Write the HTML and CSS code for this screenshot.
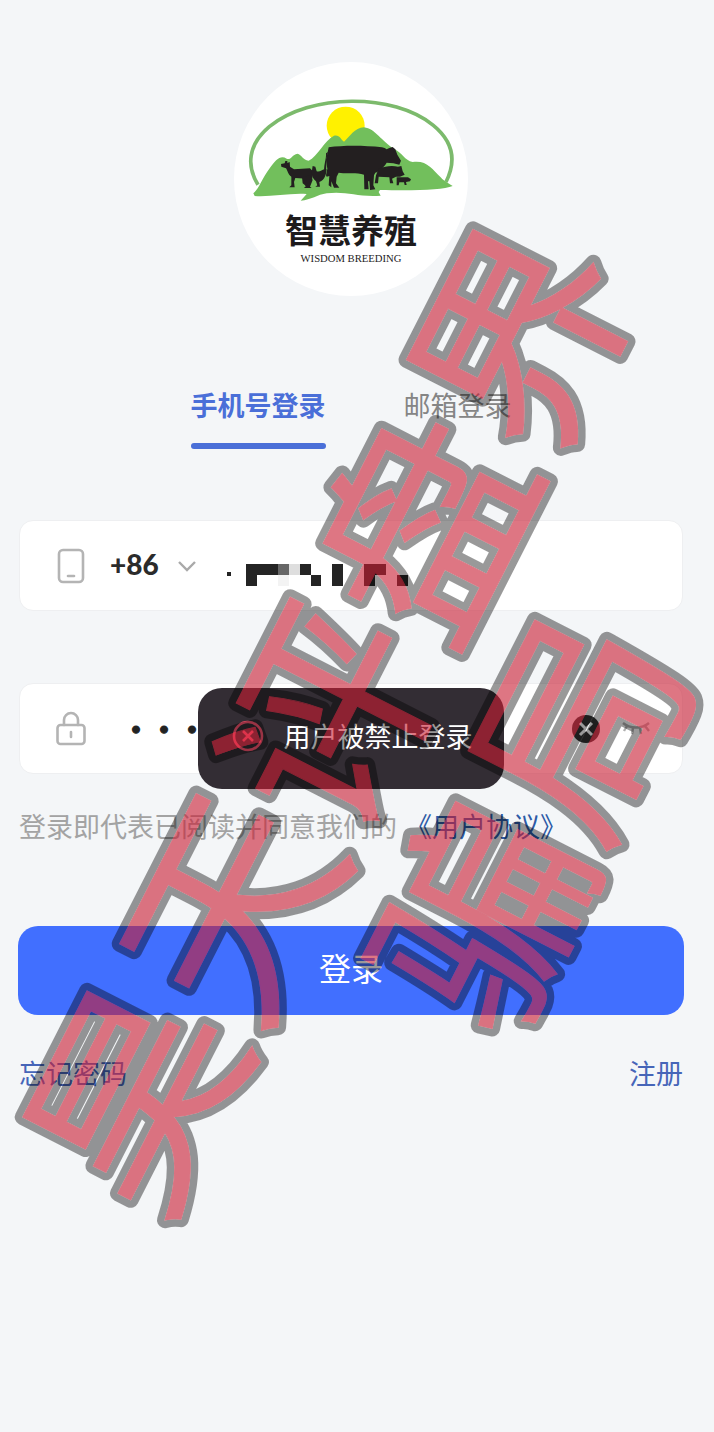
FILE: index.html
```html
<!DOCTYPE html>
<html lang="zh-CN">
<head>
  <meta charset="UTF-8">
  <meta name="viewport" content="width=device-width, initial-scale=1.0">
  <title>智慧养殖</title>
  <link rel="stylesheet" href="styles.css">
</head>
<body>

<main class="login">
  <svg class="logo" viewBox="12 6 702 702" role="img" aria-label="智慧养殖">
    <circle cx="363" cy="357" r="351" fill="#fff"/>
    <path d="M84 374C50 320 52 255 118 200C240 100 490 98 610 196C676 250 676 310 648 366" fill="none" stroke="#7cba6c" stroke-width="11"/>
    <circle cx="347" cy="197" r="57" fill="#fff100"/>
    <path d="M70 400C88 384 98 352 118 326C138 298 152 284 170 296C182 302 186 284 202 281C216 284 218 300 236 302C262 290 284 240 312 227C328 222 334 240 342 245C358 232 374 202 402 202C436 206 454 244 494 268C516 278 524 302 548 306C590 300 606 326 632 352C644 366 660 372 668 378C640 390 560 392 450 390L446 396L452 407C380 412 350 392 290 400C262 404 244 420 212 422L230 402C180 398 120 412 74 408Z" fill="#72bf5c"/>
    <g fill="#231f20">
      <!-- cow -->
      <path d="M296 262C340 256 400 256 456 262L464 264L470 268L478 264L488 261L496 268L502 284L513 302L508 314L490 310L470 308C462 322 448 334 436 338L432 346L430 376L436 388L420 390L418 364L414 364L416 388H403L402 344C380 336 352 342 326 338L320 350L318 370L328 383H312L304 364L304 382L296 376L298 348L290 350L288 346L292 326L288 300Z"/>
      <path d="M294 276C286 300 292 320 286 342L284 344C278 320 290 296 288 280Z"/>
      <!-- goat -->
      <path d="M153 312L164 310L166 303L172 303L172 309L179 306L180 320L192 328L240 325L250 335L246 360L236 378L230 384L224 372L230 356L196 354L192 366L194 382H178L184 376L184 350C174 344 172 330 168 325L154 320Z"/>
      <path d="M216 352L240 346L248 360L240 380L245 384H222L228 378L218 370Z"/>
      <!-- hen -->
      <path d="M248 318L256 320L260 334C270 338 276 326 290 328C288 342 286 360 268 366L270 380H256L262 376L258 364C244 352 244 340 248 318Z"/>
      <!-- pigs -->
      <path d="M446 326C466 318 486 316 504 320L514 318L518 334L524 344L510 350L498 350L486 356L490 370H480L478 352L446 350L444 370H434L438 346Z"/>
      <path d="M500 352L534 352L543 358L540 364L528 366L530 375H524L522 367H508L506 376H500Z"/>
    </g>
    <text class="logo-name" x="363" y="548">智慧养殖</text>
    <text class="logo-en" x="363" y="607">WISDOM BREEDING</text>
  </svg>

  <nav class="tabs">
    <button type="button" class="tab active">手机号登录</button>
    <button type="button" class="tab">邮箱登录</button>
  </nav>

  <form class="login-form">
    <div class="field">
      <svg class="field-icon" viewBox="0 0 32 38" fill="none" stroke="#b4b4b4" stroke-width="2.6" stroke-linecap="round">
        <rect x="3" y="3" width="24" height="32" rx="4"/>
        <path d="M12 29h6"/>
      </svg>
      <div class="area">
        <select class="area-code" aria-label="区号">
          <option>+86</option>
        </select>
        <svg class="chevron" viewBox="0 0 18 12" fill="none" stroke="#a9a9a9" stroke-width="2.4">
          <path d="M1 2l8 8 8-8"/>
        </svg>
      </div>
      <div class="phone">
        <input class="phone-input" type="tel" aria-label="手机号">
        <!-- masked number -->
        <svg class="phone-mask" viewBox="0 0 184 24" shape-rendering="crispEdges">
          <path d="M1 8h4v4h-4zM20 0h32v11h-21v11h-11zM74 0h11v11h10v11h-10v-11h-11zM106 0h11v22h-11zM138 0h22v11h-11v11h-11zM171 11h11v11h-11z" fill="#242424"/>
          <path d="M52 0h11v11h-11z" fill="#666"/>
          <path d="M63 0h11v11h-11z" fill="#dedede"/>
          <path d="M52 11h11v11h-11z" fill="#f3f3f3"/>
        </svg>
      </div>
    </div>

    <div class="field">
      <svg class="field-icon" viewBox="0 0 32 38" fill="none" stroke="#b4b4b4" stroke-width="2.6" stroke-linecap="round">
        <rect x="1.5" y="15" width="27" height="19" rx="3"/>
        <path d="M8 15v-5a7 7 0 0 1 14 0v5M15 22v5"/>
      </svg>
      <input class="password-input" type="password" value="12345678" aria-label="密码">
      <button type="button" class="icon-btn" aria-label="清除">
        <svg viewBox="0 0 28 28">
          <circle cx="14" cy="14" r="14" fill="#333"/>
          <path d="M8 8l12 12M20 8l-12 12" stroke="#fff" stroke-width="3"/>
        </svg>
      </button>
      <button type="button" class="icon-btn" aria-label="显示密码">
        <svg viewBox="0 0 28 28" fill="none" stroke="#b0b0b0" stroke-width="2.4">
          <path d="M1 8c7 6 19 6 26 0M5 11l-3 5M11 13l-1 6M18 13l1 6M23 11l4 5"/>
        </svg>
      </button>
    </div>

    <p class="agreement">登录即代表已阅读并同意我们的<a href="#">《用户协议》</a></p>

    <button type="submit" class="login-btn">登录</button>
  </form>

  <div class="links">
    <a href="#">忘记密码</a>
    <a href="#">注册</a>
  </div>

  <div class="toast" role="alert">
    <svg class="toast-icon" viewBox="0 0 32 32" fill="none" stroke="#ff5672" stroke-width="2.6">
      <circle cx="16" cy="16" r="14"/>
      <path d="M11 11l10 10M21 11l-10 10"/>
    </svg>
    <span>用户被禁止登录</span>
  </div>
</main>

<svg class="watermark" viewBox="0 0 714 1432">
  <defs>
    <g id="mark" transform="translate(330 717) rotate(-63)">
      <text x="0" y="78">昊天评盘界</text>
      <text x="0" y="306">骗局</text>
    </g>
    <mask id="outside" maskUnits="userSpaceOnUse" x="0" y="0" width="714" height="1432">
      <rect width="714" height="1432" fill="#fff"/>
      <use href="#mark" class="mark-hole"/>
    </mask>
  </defs>
  <g mask="url(#outside)">
    <use href="#mark" class="mark-outline"/>
  </g>
  <use href="#mark" class="mark-fill"/>
</svg>

</body>
</html>
```

FILE: styles.css
```css
* {
  box-sizing: border-box;
}
body {
  margin: 0;
  min-height: 100vh;
  position: relative;
  overflow-x: hidden;
  background: #f4f6f8;
  font-family: "Noto Sans CJK SC", sans-serif;
  font-size: 27px;
  line-height: 38px;
}
button, input, select {
  font-family: inherit;
  border: none;
  background: none;
  padding: 0;
  margin: 0;
  outline: none;
}
button {
  cursor: pointer;
}
a {
  color: #4665b8;
  text-decoration: none;
}

.login {
  position: relative;
  margin: 0 30px 0 18px;
  padding: 62px 0;
}
.logo {
  display: block;
  width: 234px;
  height: 234px;
  margin: 0 auto;
}
.logo-name {
  font-size: 99px;
  font-weight: 700;
  text-anchor: middle;
  fill: #1d1b1c;
}
.logo-en {
  font-family: "Liberation Serif", serif;
  font-size: 32px;
  text-anchor: middle;
  fill: #1d1b1c;
}

/* Tabs */
.tabs {
  display: flex;
  justify-content: center;
  gap: 78px;
  margin-top: 90px;
}
.tab {
  font-size: 27px;
  line-height: 38px;
  padding-bottom: 19px;
  border-bottom: 6px solid transparent;
  color: #858585;
}
.tab.active {
  position: relative;
  color: #4a6fd8;
  font-weight: 700;
}
.tab.active::after {
  content: "";
  position: absolute;
  left: 0;
  right: 0;
  bottom: -6px;
  height: 6px;
  border-radius: 3px;
  background: #4a6fd8;
}

/* Form */
.login-form {
  margin-top: 71px;
}
.field {
  display: flex;
  align-items: center;
  height: 91px;
  margin: 0 1px 72px;
  padding: 0 32px 0 36px;
  background: #fff;
  border: 1px solid #eeeff1;
  border-radius: 14px;
}
.field-icon {
  flex: none;
  width: 32px;
  height: 38px;
}
.area {
  display: flex;
  align-items: center;
  margin-left: 22px;
  gap: 18px;
}
.area-code {
  appearance: none;
  width: 50px;
  padding-bottom: 4px;
  font-family: Lato, sans-serif;
  font-size: 28px;
  font-weight: 900;
  color: #2b2b2b;
}
.chevron {
  width: 18px;
  height: 12px;
}
.phone {
  position: relative;
  flex: 1;
  margin-left: 30px;
}
.phone-input {
  width: 100%;
  height: 60px;
  font-size: 28px;
}
.phone-mask {
  position: absolute;
  left: 0;
  top: 28px;
  width: 184px;
  height: 24px;
}
.password-input {
  flex: 1;
  min-width: 0;
  margin-left: 34px;
  height: 60px;
  font-size: 28px;
  font-weight: 700;
  color: #222;
  -webkit-text-stroke: 1px #222;
}
.icon-btn {
  width: 28px;
  height: 28px;
  margin-left: 22px;
}
.icon-btn svg {
  display: block;
}
.agreement {
  margin: -39px 1px 81px;
  color: #a3a3a3;
}
.agreement a {
  margin-left: 8px;
  color: #2c5aa6;
}
.login-btn {
  width: 100%;
  height: 89px;
  padding-bottom: 8px;
  border-radius: 20px;
  background: #416fff;
  color: #fff;
  font-size: 32px;
}
.links {
  display: flex;
  justify-content: space-between;
  margin: 39px 1px 0;
}

/* Toast */
.toast {
  position: absolute;
  top: 688px;
  left: 50%;
  transform: translateX(-50%);
  display: flex;
  align-items: center;
  justify-content: center;
  gap: 20px;
  width: 306px;
  height: 101px;
  padding: 0 0 6px 2px;
  border-radius: 24px;
  background: #332d34;
  color: #fff;
  white-space: nowrap;
}
.toast-icon {
  width: 32px;
  height: 32px;
}

/* Watermark */
.watermark {
  position: absolute;
  top: 0;
  left: 0;
  width: 100%;
  pointer-events: none;
  font-size: 213px;
  text-anchor: middle;
}
.mark-hole {
  fill: #000;
  stroke: #000;
  stroke-width: 1px;
}
.mark-outline {
  fill: none;
  stroke: #000;
  stroke-width: 16px;
  stroke-linejoin: round;
  opacity: 0.4;
}
.mark-fill {
  fill: #c91c32;
  stroke: #c91c32;
  stroke-width: 1px;
  opacity: 0.6;
}
```
